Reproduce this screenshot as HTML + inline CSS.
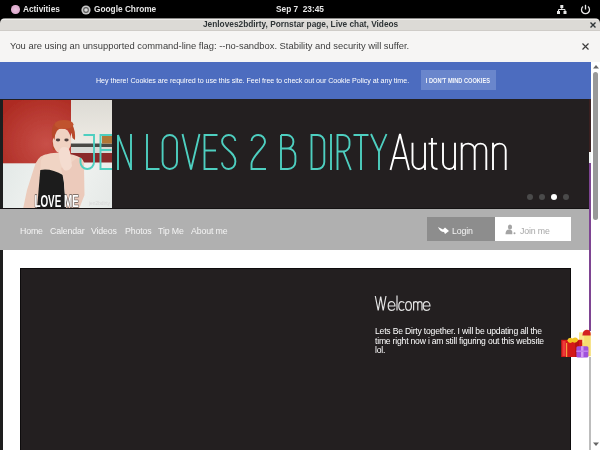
<!DOCTYPE html>
<html><head><meta charset="utf-8">
<style>
*{margin:0;padding:0;box-sizing:border-box}
html,body{width:600px;height:450px;overflow:hidden;background:#000;font-family:"Liberation Sans",sans-serif;-webkit-font-smoothing:antialiased}
.a{position:absolute;white-space:nowrap;will-change:transform}
#top{left:0;top:0;width:600px;height:19px;background:#000;color:#e6e6e6;font-weight:bold;font-size:8.3px}
#title{left:0;top:18px;width:600px;height:13px;background:linear-gradient(#8a8987 0,#8a8987 1px,#eeedeb 1px,#eeedeb 2px,#dcdad6 2px,#dcdad6 12px,#cfccc8 12px);border-radius:5px 5px 0 0;font-weight:bold;font-size:8.3px;color:#2e3436}
#info{left:0;top:31px;width:600px;height:31px;background:#f6f5f4;color:#3d3d3d;font-size:9.4px}
#web{left:0;top:62px;width:591px;height:388px;background:#fff;overflow:hidden}
#sb{left:591px;top:62px;width:9px;height:388px;background:#fff}
.nav{top:162.5px;font-size:8.8px;letter-spacing:-0.15px;color:#f4f4f4;line-height:12px}
</style></head><body>
<div id="top" class="a">
  <div class="a" style="left:10.8px;top:5px;width:8.5px;height:8.5px;border-radius:50%;background:radial-gradient(circle at 50% 50%,#e8c0dc 0,#dca8cc 70%,#b888a8 100%)"></div>
  <div class="a" style="left:23px;top:3.3px;line-height:13px">Activities</div>
  <svg class="a" style="left:80.5px;top:4.5px" width="10" height="10" viewBox="0 0 10 10"><circle cx="5" cy="5" r="4.6" fill="#c8c8c8"/><circle cx="5" cy="5" r="2.9" fill="#5a5a5a"/><circle cx="5" cy="5" r="1.8" fill="#d8d8d8"/></svg>
  <div class="a" style="left:94px;top:3.3px;line-height:13px">Google Chrome</div>
  <div class="a" style="left:276px;top:3.3px;line-height:13px">Sep 7&nbsp; 23:45</div>
  <svg class="a" style="left:556px;top:4px" width="12" height="11" viewBox="0 0 12 11">
    <rect x="4.3" y="1" width="3" height="3" fill="#e6e6e6"/>
    <rect x="1" y="7" width="3" height="3" fill="#e6e6e6"/>
    <rect x="7.5" y="7" width="3" height="3" fill="#e6e6e6"/>
    <path d="M5.8,4 V5.5 M2.5,7 V5.5 H9 V7" stroke="#e6e6e6" stroke-width="1" fill="none"/>
  </svg>
  <svg class="a" style="left:580px;top:4px" width="11" height="11" viewBox="0 0 11 11">
    <path d="M3,2.6 A4,4 0 1 0 8,2.6" stroke="#e6e6e6" stroke-width="1.3" fill="none"/>
    <path d="M5.5,0.8 V5.5" stroke="#e6e6e6" stroke-width="1.3"/>
  </svg>
</div>
<div id="title" class="a">
  <div class="a" style="left:203px;top:0;line-height:13px">Jenloves2bdirty, Pornstar page, Live chat, Videos</div>
  <svg class="a" style="left:590px;top:4px" width="6" height="6" viewBox="0 0 6 6"><path d="M0.5,0.5 L5.5,5.5 M5.5,0.5 L0.5,5.5" stroke="#2e3436" stroke-width="1.4"/></svg>
</div>
<div id="info" class="a">
  <div class="a" style="left:10px;top:8px;line-height:13px">You are using an unsupported command-line flag: --no-sandbox. Stability and security will suffer.</div>
  <svg class="a" style="left:581.5px;top:12px" width="7" height="7" viewBox="0 0 7 7"><path d="M0.5,0.5 L6.5,6.5 M6.5,0.5 L0.5,6.5" stroke="#3d3d3d" stroke-width="1.2"/></svg>
</div>
<div id="web" class="a">
  <div class="a" style="left:0;top:0;width:591px;height:37px;background:#4c6cbf"></div>
  <div class="a" style="left:96px;top:15px;font-size:7.13px;letter-spacing:-0.04px;color:#fff;line-height:9px">Hey there! Cookies are required to use this site. Feel free to check out our Cookie Policy at any time.</div>
  <div class="a" style="left:421px;top:8px;width:75px;height:20px;background:#6a86cc"></div>
  <svg class="a" style="left:0;top:0" width="591" height="37"><text x="425.8" y="21.3" font-family="Liberation Sans" font-weight="bold" font-size="7" fill="#f4f6fb" textLength="64.2" lengthAdjust="spacingAndGlyphs">I DON'T MIND COOKIES</text></svg>
  <!-- header -->
  <div class="a" style="left:0;top:37px;width:589px;height:110px;background:#231f20"></div>
  <div class="a" style="left:0;top:37px;width:3px;height:351px;background:#1e1e1e"></div>
  <svg class="a" style="left:3px;top:38px" width="109" height="109" viewBox="0 0 109 109">
    <defs>
      <radialGradient id="wall" cx="0.65" cy="0.7" r="0.8"><stop offset="0" stop-color="#c85048"/><stop offset="1" stop-color="#ad2a22"/></radialGradient>
      <linearGradient id="room" x1="0" y1="0" x2="0" y2="1"><stop offset="0" stop-color="#dcdad4"/><stop offset="1" stop-color="#eeebe4"/></linearGradient>
      <linearGradient id="bed" x1="0" y1="0.55" x2="1" y2="1"><stop offset="0" stop-color="#e2e8e6"/><stop offset="0.5" stop-color="#f2f4f2"/><stop offset="1" stop-color="#e4e8e6"/></linearGradient>
      <filter id="bl"><feGaussianBlur stdDeviation="0.7"/></filter>
    </defs>
    <g filter="url(#bl)">
    <rect x="-2" y="-2" width="113" height="113" fill="url(#bed)"/>
    <rect x="-2" y="-2" width="70" height="65.3" fill="url(#wall)"/>
    <rect x="68" y="-2" width="43" height="45" fill="url(#room)"/>
    <rect x="68" y="43.5" width="43" height="3.5" fill="#4a4844"/>
    <rect x="99" y="36" width="12" height="7.5" fill="#b07838"/>
    <rect x="68" y="47" width="43" height="6" fill="#d8dad6"/>
    <rect x="68" y="53" width="43" height="9.5" fill="#8a2c2c"/>
    <path d="M41,55 Q46,54 47,60 L41,72 L37,95 L35,109 L20,109 L24,90 L31,68 Q34,57 41,55 Z" fill="#ecccbc"/>
    <path d="M41,55 Q50,52 58,53 Q72,54 78,58 Q82,61 81,68 L60,75.3 L37.3,70 L38,60 Z" fill="#f0d4c4"/>
    <path d="M37.3,70 Q48,68 60.3,75.3 L63,109 L34,109 Z" fill="#1a1e1c"/>
    <path d="M58,100 L75,100 L75,109 L58,109 Z" fill="#1a1e1c"/>
    <path d="M74,58 Q81,59 81,67 L81.5,95 L76,109 L63,109 L61,82 L58,68 L66,64 Z" fill="#eccabb"/>
    <path d="M50,50 Q48,36 52,30 L56,42 L55,50 Z" fill="#b8482a"/>
    <ellipse cx="59" cy="41" rx="9.3" ry="12.7" fill="#f0d2c2"/>
    <path d="M49,36 Q47,20 61,21 Q73,21 72,40 L69.5,38 Q68.5,28 59,28 Q52,28.5 51.5,40 Z" fill="#b8482a"/>
    <ellipse cx="61" cy="24.5" rx="9.5" ry="4.5" fill="#c0522e"/>
    <ellipse cx="55" cy="40" rx="2.2" ry="1.4" fill="#50403e"/>
    <ellipse cx="63.5" cy="40" rx="2.2" ry="1.4" fill="#50403e"/>
    <path d="M56,52 Q57,47 61,47 Q66,47 67,52 L69,66 Q66,72 61,70 Q56,64 56,52 Z" fill="#f4dcd0"/>
    </g>
    <text x="31.4" y="107" font-family="Liberation Sans" font-weight="bold" font-size="15.9" fill="#fff" textLength="44.4" lengthAdjust="spacingAndGlyphs" stroke="#1a1a1a" stroke-width="1" paint-order="stroke">LOVE ME</text>
    <text x="86" y="105" font-family="Liberation Sans" font-size="5" fill="#d8d8d8" textLength="21" lengthAdjust="spacingAndGlyphs">jen2bdirty</text>
  </svg>
  <!-- dots -->
  <div class="a" style="left:527px;top:132px;width:6px;height:6px;border-radius:50%;background:#4a4a4a"></div>
  <div class="a" style="left:539px;top:132px;width:6px;height:6px;border-radius:50%;background:#4a4a4a"></div>
  <div class="a" style="left:551px;top:132px;width:6px;height:6px;border-radius:50%;background:#fff"></div>
  <div class="a" style="left:563px;top:132px;width:6px;height:6px;border-radius:50%;background:#4a4a4a"></div>
  <!-- nav -->
  <div class="a" style="left:0;top:146px;width:589px;height:1px;background:#141213"></div>
  <div class="a" style="left:0;top:147px;width:589px;height:40.6px;background:#b0b0b0"></div>
  <div class="a nav" style="left:20px">Home</div>
  <div class="a nav" style="left:50px">Calendar</div>
  <div class="a nav" style="left:91px">Videos</div>
  <div class="a nav" style="left:125px">Photos</div>
  <div class="a nav" style="left:158px">Tip Me</div>
  <div class="a nav" style="left:191px">About me</div>
  <div class="a" style="left:427px;top:155px;width:68px;height:24px;background:#8d8d8d"></div>
  <div class="a" style="left:495px;top:155px;width:76px;height:24px;background:#fff"></div>
  <div class="a nav" style="left:452px">Login</div>
  <div class="a nav" style="left:520px;color:#a8a8a8">Join me</div>
  <!-- right line -->
  <div class="a" style="left:589px;top:37px;width:2px;height:53px;background:#3a2020"></div>
  <div class="a" style="left:589px;top:90px;width:2px;height:11px;background:#f0f4f4"></div>
  <div class="a" style="left:589px;top:101px;width:2px;height:168px;background:#7e4492"></div>
  <div class="a" style="left:589px;top:295px;width:2px;height:93px;background:#bdbdbd"></div>
  <!-- content -->
  <div class="a" style="left:20px;top:206px;width:551px;height:200px;background:#231f20;border:1px solid #0e0c0d"></div>
  <div class="a" style="left:375px;top:265px;font-size:8.6px;letter-spacing:-0.2px;color:#fff;line-height:9.6px">Lets Be Dirty together. I will be updating all the<br>time right now i am still figuring out this website<br>lol.</div>
</div>
<div id="sb" class="a">
  <svg class="a" style="left:2px;top:3px" width="6" height="4" viewBox="0 0 6 4"><path d="M0,3.5 L3,0 L6,3.5 Z" fill="#666"/></svg>
  <div class="a" style="left:2.3px;top:10px;width:4.7px;height:148px;border-radius:2.5px;background:#999"></div>
  <svg class="a" style="left:2px;top:380px" width="6" height="4" viewBox="0 0 6 4"><path d="M0,0.5 L3,4 L6,0.5 Z" fill="#666"/></svg>
</div>
<svg class="a" style="left:0;top:0" width="600" height="450" viewBox="0 0 600 450">
 <g fill="none" stroke="#4ecfc0" stroke-width="1.9" stroke-miterlimit="2">
  <path d="M83.5,135 H94 V162.2 A6.75,6.75 0 0 1 80.5,162.2 V158"/>
  <path d="M112,135 H100.5 V169 H112 M100.5,150 H111.5"/>
  <path d="M118,170 V135 L131,169 M131,170 V134"/>
  <path d="M147,134 V169 H159.5"/>
  <rect x="162.6" y="135" width="14.4" height="34" rx="7.2"/>
  <path d="M182.5,134 L191,169.5 L199.5,134"/>
  <path d="M217.5,135 H204.5 V169 H217.5 M204.5,150.5 H216"/>
  <path d="M235.3,141 C235.3,137.5 232.3,135 228.7,135 C225,135 222.1,137.8 222.1,141.5 C222.1,149 235.4,151 235.4,161.5 C235.4,165.8 232.5,169 228.7,169 C224.8,169 222,166 222,162.5"/>
  <path d="M251.5,141 C251.5,137.5 254.5,135 258.2,135 C262.2,135 265,138 265,142 C265,147.5 251.5,156 251.5,164 V169 H266"/>
  <path d="M281,135 V169 H288 C292.2,169 295.4,166 295.4,161.5 V156 C295.4,151.8 292.2,148.5 288,148.5 H281 M281,135 H287 C290.5,135 293.4,137.8 293.4,141.5 V142 C293.4,145.6 290.5,148.5 287,148.5"/>
  <path d="M311.5,135 V169 H317.5 C321.3,169 324.3,166 324.3,162 V142 C324.3,138 321.3,135 317.5,135 Z"/>
  <path d="M331,134 V170"/>
  <path d="M337.5,170 V135 H343 C346.6,135 349.5,138 349.5,141.5 V145 C349.5,148.6 346.6,151.5 343,151.5 H337.5 M343.5,151.5 L350.8,170"/>
  <path d="M353.5,135 H368.5 M361,135 V170"/>
  <path d="M371,134 L379,151.5 L386.5,134 M379,151.5 V170"/>
 </g>
 <g fill="none" stroke="#ffffff" stroke-width="1.9" stroke-miterlimit="2">
  <path d="M390.5,170 L400,134 L409,170 M393.7,158 H406"/>
  <path d="M412.5,142.7 V162.5 C412.5,166.3 415.3,169 418.8,169 C422.2,169 425,166.3 425,162.5 M425,142.7 V170"/>
  <path d="M432,138 V164 C432,167 434,169 437.5,169 M428.5,143.6 H437"/>
  <path d="M443,142.7 V162.5 C443,166.3 445.8,169 449.2,169 C452.6,169 455,166.3 455,162.5 M455,142.7 V170"/>
  <path d="M461.7,170 V142.7 M461.7,150 C461.7,146.2 464.5,143.6 468.2,143.6 C471.8,143.6 474.7,146.2 474.7,150 V170 M474.7,150 C474.7,146.2 477,143.6 480.5,143.6 C484,143.6 486.3,146.2 486.3,150 V170"/>
  <path d="M493,170 V142.7 M493,150 C493,146.2 496,143.6 499.5,143.6 C503,143.6 505.7,146.2 505.7,150 V170"/>
 </g>
 <g fill="none" stroke="#e4e4e4" stroke-width="1.2">
  <path d="M375.3,296 L378.2,310.5 L380.7,296.5 L383.2,310.5 L386,296"/>
  <path d="M388.2,306 H395 C395,303.3 393.3,301.6 391.6,301.6 C389.7,301.6 388.2,303.4 388.2,306 C388.2,308.6 389.7,310.4 391.7,310.4 C393,310.4 394.2,309.7 394.8,308.5"/>
  <path d="M397,295.5 V310.5"/>
  <path d="M404.3,303 C403.8,302 402.8,301.6 401.7,301.6 C399.8,301.6 398.8,303.4 398.8,306 C398.8,308.6 399.8,310.4 401.7,310.4 C402.8,310.4 403.8,310 404.3,309"/>
  <ellipse cx="408.5" cy="306" rx="2.9" ry="4.4"/>
  <path d="M413.6,310.5 V301.6 M413.6,304 C413.6,302.4 414.6,301.6 415.8,301.6 C417,301.6 417.8,302.4 417.8,304 V310.5 M417.8,304 C417.8,302.4 418.8,301.6 420,301.6 C421.2,301.6 422,302.4 422,304 V310.5"/>
  <path d="M423.2,306 H430 C430,303.3 428.3,301.6 426.6,301.6 C424.7,301.6 423.2,303.4 423.2,306 C423.2,308.6 424.7,310.4 426.7,310.4 C428,310.4 429.2,309.7 429.8,308.5"/>
 </g>
 <!-- login icons -->
 <path d="M438,227 L443,229.5 L445,227.5 L449,231 L445,234 L444,232 Q440,232 438,227 Z" fill="#fff"/>
 <ellipse cx="510" cy="227" rx="2.1" ry="2.5" fill="#a4a4a4"/>
 <path d="M505.5,234.2 Q505.5,229.5 509,229.5 Q512.3,229.5 512.3,232 L512.3,234.2 Z" fill="#a4a4a4"/>
 <circle cx="514.5" cy="233.2" r="1" fill="#a4a4a4"/>
 <!-- gift -->
 <g>
  <rect x="579.2" y="332.6" width="11.6" height="23.6" fill="#f6dc70"/>
  <rect x="579.2" y="332.6" width="5" height="10" fill="#fae890"/>
  <path d="M582.4,335.4 Q582.8,330 586.5,329.8 Q590.6,329.6 590.6,334 L590.6,335.4 Z" fill="#d42222"/>
  <rect x="561.2" y="339.8" width="21" height="17.2" fill="#d41818"/>
  <rect x="562.5" y="341" width="3" height="15" fill="#ee3a3a"/>
  <rect x="575" y="341" width="4" height="16" fill="#b81212"/>
  <rect x="566" y="343" width="1.2" height="14" fill="#f4a040"/>
  <path d="M567.2,340.5 Q568.5,336.5 572.5,338.5 Q576.5,336 578.4,340 Q576,344.2 572.5,342 Q569,344.5 567.2,340.5 Z" fill="#f2c424"/>
  <rect x="576.4" y="346.2" width="12" height="11.2" rx="1.5" fill="#a052dc"/>
  <rect x="581" y="346.2" width="2.5" height="11.2" fill="#d098f2"/>
  <rect x="576.4" y="350.5" width="12" height="1.5" fill="#c080ec"/>
 </g>
</svg>
</body></html>
